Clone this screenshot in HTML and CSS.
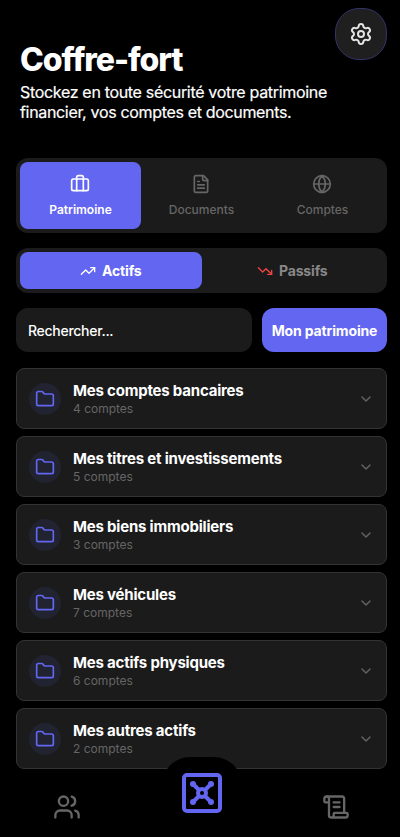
FILE: index.html
```html
<!DOCTYPE html>
<html lang="fr">
<head>
<meta charset="utf-8">
<title>Coffre-fort</title>
<link rel="stylesheet" href="styles.css">
</head>
<body>
<svg class="defs" width="0" height="0">
  <symbol id="folder" viewBox="0 0 24 24"><path d="M20 20a2 2 0 0 0 2-2V8a2 2 0 0 0-2-2h-7.900a2 2 0 0 1-1.690-.9L9.600 3.900A2 2 0 0 0 7.930 3H4a2 2 0 0 0-2 2v13a2 2 0 0 0 2 2Z"/></symbol>
  <symbol id="chevron" viewBox="0 0 24 24"><path d="m6 9 6 6 6-6"/></symbol>
</svg>
<div class="screen">
  <header class="header">
    <div class="intro">
      <h1 class="title">Coffre-fort</h1>
      <p class="subtitle"><span class="line1">Stockez en toute sécurité votre patrimoine</span><br><span class="line2">financier, vos comptes et documents.</span></p>
    </div>
    <button class="settings" aria-label="Réglages">
      <svg class="icon" width="24" height="24" viewBox="0 0 24 24"><path d="M9.671 4.136a2.340 2.340 0 0 1 4.659 0 2.340 2.340 0 0 0 3.319 1.915 2.340 2.340 0 0 1 2.330 4.033 2.340 2.340 0 0 0 0 3.831 2.340 2.340 0 0 1-2.330 4.033 2.340 2.340 0 0 0-3.319 1.915 2.340 2.340 0 0 1-4.659 0 2.340 2.340 0 0 0-3.320-1.915 2.340 2.340 0 0 1-2.330-4.033 2.340 2.340 0 0 0 0-3.831A2.340 2.340 0 0 1 6.350 6.051a2.340 2.340 0 0 0 3.319-1.915"/><circle cx="12" cy="12" r="3"/></svg>
    </button>
  </header>

  <nav class="tabs">
    <button class="tab active">
      <svg class="icon" width="20" height="20" viewBox="0 0 24 24"><path d="M16 20V4a2 2 0 0 0-2-2h-4a2 2 0 0 0-2 2v16"/><rect x="2" y="6" width="20" height="14" rx="2"/></svg>
      <span class="tab-label">Patrimoine</span>
    </button>
    <button class="tab">
      <svg class="icon" width="20" height="20" viewBox="0 0 24 24"><path d="M15 2H6a2 2 0 0 0-2 2v16a2 2 0 0 0 2 2h12a2 2 0 0 0 2-2V7Z"/><path d="M14 2v4a2 2 0 0 0 2 2h4M10 9H8M16 13H8M16 17H8"/></svg>
      <span class="tab-label">Documents</span>
    </button>
    <button class="tab">
      <svg class="icon" width="20" height="20" viewBox="0 0 24 24"><circle cx="12" cy="12" r="10"/><path d="M12 2a14.500 14.500 0 0 0 0 20 14.500 14.500 0 0 0 0-20M2 12h20"/></svg>
      <span class="tab-label">Comptes</span>
    </button>
  </nav>

  <div class="segments">
    <button class="segment active">
      <svg class="icon" width="16" height="16" viewBox="0 0 24 24"><path d="m22 7-8.500 8.500-5-5L2 17"/><path d="M16 7h6v6"/></svg>
      <span class="assets">Actifs</span>
    </button>
    <button class="segment">
      <svg class="icon down" width="16" height="16" viewBox="0 0 24 24"><path d="m22 17-8.500-8.500-5 5L2 7"/><path d="M16 17h6v-6"/></svg>
      <span class="debts">Passifs</span>
    </button>
  </div>

  <div class="toolbar">
    <input class="search" type="text" placeholder="Rechercher...">
    <button class="wealth">Mon patrimoine</button>
  </div>

  <main class="list">
    <section class="card"><span class="badge"><svg class="icon" width="20" height="20"><use href="#folder"/></svg></span><div class="info"><h2 class="name">Mes comptes bancaires</h2><p class="count">4 comptes</p></div><svg class="icon chevron" width="16" height="16"><use href="#chevron"/></svg></section>
    <section class="card"><span class="badge"><svg class="icon" width="20" height="20"><use href="#folder"/></svg></span><div class="info"><h2 class="name">Mes titres et investissements</h2><p class="count">5 comptes</p></div><svg class="icon chevron" width="16" height="16"><use href="#chevron"/></svg></section>
    <section class="card"><span class="badge"><svg class="icon" width="20" height="20"><use href="#folder"/></svg></span><div class="info"><h2 class="name">Mes biens immobiliers</h2><p class="count">3 comptes</p></div><svg class="icon chevron" width="16" height="16"><use href="#chevron"/></svg></section>
    <section class="card"><span class="badge"><svg class="icon" width="20" height="20"><use href="#folder"/></svg></span><div class="info"><h2 class="name">Mes véhicules</h2><p class="count">7 comptes</p></div><svg class="icon chevron" width="16" height="16"><use href="#chevron"/></svg></section>
    <section class="card"><span class="badge"><svg class="icon" width="20" height="20"><use href="#folder"/></svg></span><div class="info"><h2 class="name">Mes actifs physiques</h2><p class="count">6 comptes</p></div><svg class="icon chevron" width="16" height="16"><use href="#chevron"/></svg></section>
    <section class="card"><span class="badge"><svg class="icon" width="20" height="20"><use href="#folder"/></svg></span><div class="info"><h2 class="name">Mes autres actifs</h2><p class="count">2 comptes</p></div><svg class="icon chevron" width="16" height="16"><use href="#chevron"/></svg></section>
  </main>

  <footer class="bottom-nav">
    <svg class="icon" width="28" height="28" viewBox="0 0 24 24"><path d="M16 21v-2a4 4 0 0 0-4-4H6a4 4 0 0 0-4 4v2"/><circle cx="9" cy="7" r="4"/><path d="M22 21v-2a4 4 0 0 0-3-3.870M16 3.130a4 4 0 0 1 0 7.750"/></svg>
    <div class="vault">
      <svg width="40" height="40" viewBox="0 0 40 40"><rect x="2" y="2" width="36" height="36" rx="3"/><path d="m11 11 5.500 5.500M29 11l-5.500 5.500M11 29l5.500-5.500M29 29l-5.500-5.500"/><circle class="knob" cx="20" cy="20" r="4"/><g class="tips"><circle cx="11" cy="11" r="3"/><circle cx="29" cy="11" r="3"/><circle cx="11" cy="29" r="3"/><circle cx="29" cy="29" r="3"/></g></svg>
    </div>
    <svg class="icon" width="28" height="28" viewBox="0 0 24 24"><path d="M15 12h-5M15 8h-5M19 17V5a2 2 0 0 0-2-2H4"/><path d="M8 21h12a2 2 0 0 0 2-2v-1a1 1 0 0 0-1-1H11a1 1 0 0 0-1 1v1a2 2 0 1 1-4 0V5a2 2 0 1 0-4 0v2a1 1 0 0 0 1 1h3"/></svg>
  </footer>
</div>
</body>
</html>
```
FILE: styles.css
```css
* { box-sizing: border-box; margin: 0; }
body { background: #000; color: #fff; font-family: Inter, "Liberation Sans", sans-serif; }
button { border: 0; padding: 0; background: none; color: inherit; font: inherit; }
.defs { display: block; }
.icon { display: block; flex: none; fill: none; stroke: currentColor; stroke-width: 2; stroke-linecap: round; stroke-linejoin: round; }
.screen { display: flex; flex-direction: column; width: 400px; height: 837px; padding: 8px 13px 0 16px; overflow: hidden; }

.header { display: flex; justify-content: space-between; height: 150px; padding-left: 4px; flex: none; }
.intro { padding-top: 32px; white-space: nowrap; }
.title { font-size: 32px; font-weight: 800; line-height: 40px; letter-spacing: -1.05px; }
.subtitle { margin-top: 2px; font-size: 16px; line-height: 20px; letter-spacing: -0.32px; -webkit-text-stroke: 0.2px #fff; }
.line2 { letter-spacing: -0.33px; }
.settings { display: flex; align-items: center; justify-content: center; flex: none; width: 52px; height: 52px; border: 1px solid #33336a; border-radius: 24px; background: #1f1f1f; color: #e4e4e4; }

.tabs { display: flex; flex: none; height: 75px; padding: 4px; border-radius: 12px; background: #1b1b1b; }
.tab { display: flex; flex: 1; flex-direction: column; align-items: center; gap: 8px; padding-top: 12px; border-radius: 8px; color: #666; font-size: 12px; font-weight: 500; line-height: 16px; }
.tab .icon { margin-left: -1px; stroke-width: 2; }
.tab.active { background: #6366f1; color: #fff; font-weight: 600; }

.segments { display: flex; flex: none; height: 45px; margin-top: 15px; padding: 4px; border-radius: 12px; background: #1b1b1b; }
.segment { display: flex; flex: 1; align-items: center; justify-content: center; gap: 6px; border-radius: 8px; color: #888; font-size: 14px; font-weight: 700; letter-spacing: -0.15px; }
.segment.active { background: #6366f1; color: #fff; }
.down { color: #ef4444; }

.toolbar { display: flex; flex: none; gap: 10px; height: 44px; margin-top: 15px; }
.search { flex: 1; min-width: 0; padding: 1px 12px; border: 0; border-radius: 12px; outline: 0; background: #1b1b1b; color: #fff; font: 500 14px Inter, sans-serif; letter-spacing: -0.28px; }
.search::placeholder { color: #fff; opacity: 1; }
.wealth { width: 125px; border-radius: 12px; background: #6366f1; font-size: 14px; font-weight: 700; letter-spacing: -0.15px; white-space: nowrap; }

.list { display: flex; flex: none; flex-direction: column; gap: 7px; margin-top: 16px; }
.card { display: flex; align-items: center; height: 61px; padding: 0 12px; border: 1px solid #333; border-radius: 8px; background: #1b1b1b; }
.badge { display: flex; align-items: center; justify-content: center; width: 32px; height: 32px; border-radius: 50%; background: #212331; color: #6366f1; }
.badge .icon { stroke-width: 2; }
.info { flex: 1; margin-left: 12px; white-space: nowrap; }
.name { font-size: 15px; font-weight: 700; line-height: 20px; letter-spacing: -0.2px; }
.count { color: #666; font-size: 12px; line-height: 16px; }
.chevron { color: #666; }

.bottom-nav { position: relative; display: flex; flex: none; justify-content: space-between; height: 68px; padding: 24px 37px 0; color: #666; }
.bottom-nav .icon { stroke-width: 2; }
.vault { position: absolute; left: 146px; top: -12px; width: 80px; height: 80px; padding: 16px 20px; border-radius: 28px; background: #000; }
.vault svg { display: block; fill: none; stroke: #6366f1; stroke-width: 4; stroke-linecap: round; }
.vault .tips { fill: #6366f1; stroke: none; }
```
